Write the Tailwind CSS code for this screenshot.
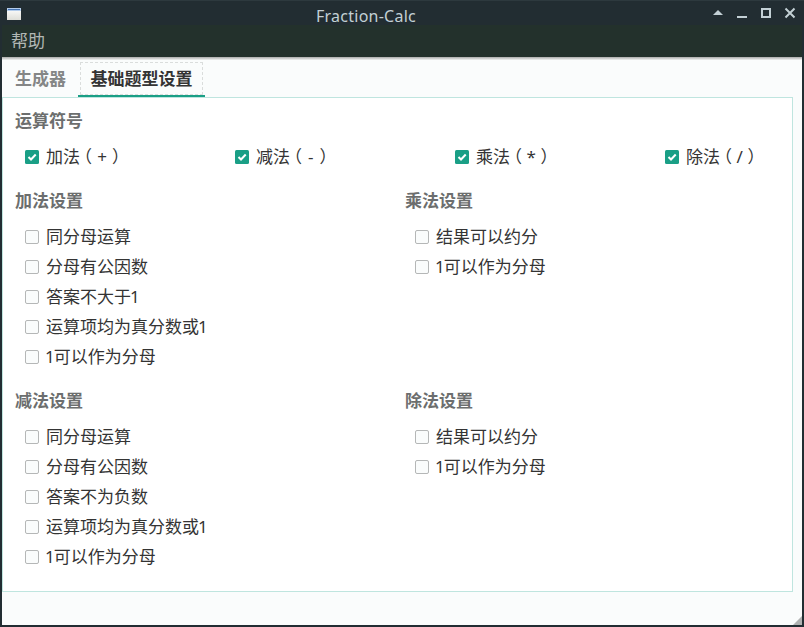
<!DOCTYPE html>
<html lang="zh-CN"><head><meta charset="utf-8"><title>Fraction-Calc</title>
<script src="https://cdn.jsdelivr.net/npm/@tailwindcss/browser@4"></script></head>
<body class="w-[804px] h-[627px] overflow-hidden bg-[#222d32]">
<div class="relative w-[804px] h-[627px] flex flex-col px-[2px] pb-[2px] bg-[#222d32] text-[17px] leading-[30px] text-[#343434] font-['Noto_Sans','Noto_Sans_CJK_SC',sans-serif]">
<header class="h-[25px] -mx-[2px] shrink-0 flex items-center border-t border-[#2d393e] relative text-[#c3d0d5]">
<svg class="ml-[7px] mt-px" width="14" height="12"><defs><linearGradient id="g" x2="0" y2="1"><stop stop-color="#fff"/><stop offset="1" stop-color="#deded8"/></linearGradient></defs><rect width="14" height="12" fill="url(#g)"/><rect width="14" height="3" fill="#b4cdec"/><rect x="1" y="1" width="12" height="1" fill="#4574b4"/></svg>
<h1 class="ml-[295px] text-[16px] leading-[24px] mt-[5px] tracking-[0.25px]">Fraction-Calc</h1>
<svg class="ml-auto mr-[7px]" width="85" height="24" fill="none" stroke="#c3d0d5" stroke-width="2"><path d="M1 14L6 9L11 14Z" fill="#c3d0d5" stroke="none"/><path d="M25 16H35"/><rect x="50" y="8" width="8" height="8"/><path d="M73.500 7.500L82.500 16.500M82.500 7.500L73.500 16.500"/></svg>
</header>
<nav class="h-8 shrink-0 bg-[#23312c] text-[#b1b7b4] pl-[9px] pt-px"><span>帮助</span></nav>
<main class="flex-1 bg-[#fafcfc] overflow-hidden">
<div class="h-[3px] bg-linear-to-b from-[#aaa] to-[#f2f4f4]"></div>
<div class="h-[37px] flex font-bold leading-[37px]">
<span class="w-[76px] pl-[13px] text-[#848686]">生成器</span>
<span class="w-[127px] h-[37px] border-b-2 border-[#1a9f86] px-[2px] pt-[2px] text-[#343434]"><span class="block h-[33px] border border-dashed border-[#dadddc] text-center leading-[31px]">基础题型设置</span></span>
</div>
<section class="w-[791px] h-[495px] border border-[#bfe5df] bg-white pl-[12px] pt-2">
<h2 class="font-bold text-[#6c6e6e]">运算符号</h2>
<div id="ops" class="flex pl-[10px] mt-[6px] h-[30px]"></div>
<div id="groups" class="grid grid-cols-[390px_380px] grid-rows-[200px_200px] mt-[14px]"></div>
</section>
</main>
<svg class="absolute right-[2px] bottom-[2px]" width="9" height="9"><path d="M0 9L9 0V9Z" fill="#b0b2b2"/></svg>
</div>
<script>
const box = on => on
 ? '<svg class="mr-[7px] shrink-0" width="14" height="14"><rect width="14" height="14" rx="1.5" fill="#1a9f86"/><path d="M3.500 7L6 9.500L10.700 4.500" fill="none" stroke="#fff" stroke-width="2"/></svg>'
 : '<span class="w-[14px] h-[14px] mr-[7px] shrink-0 rounded-[2px] border border-[#b5b7b7] bg-[#fafcfc]"></span>';
const sign = (s, w) => `<span class="w-[17px] pl-[3.5px] [font-feature-settings:'halt']">（</span><span class="flex justify-center" style="width:${w}px">${s}</span><span class="w-[17px] pl-[5px] [font-feature-settings:'halt']">）</span>`;
const label = s => s.replace(/^1/, '<span class="-ml-px tracking-[-1px]">1</span>').replace(/1$/, '<span class="-ml-px">1</span>');
document.getElementById('ops').innerHTML = [['加法','+',10,210],['减法','-',7.5,220],['乘法','*',8.5,210],['除法','/',5.5,100]].map(o =>
 `<label class="flex items-center shrink-0 h-[30px]" style="width:${o[3]}px">${box(true)}<span class="flex h-[30px] whitespace-nowrap"><span>${o[0]}</span>${sign(o[1], o[2])}</span></label>`).join('');
document.getElementById('groups').innerHTML = [
 ['加法设置','同分母运算','分母有公因数','答案不大于1','运算项均为真分数或1','1可以作为分母'],
 ['乘法设置','结果可以约分','1可以作为分母'],
 ['减法设置','同分母运算','分母有公因数','答案不为负数','运算项均为真分数或1','1可以作为分母'],
 ['除法设置','结果可以约分','1可以作为分母']
].map(([t, ...items]) => `<div><h2 class="h-[30px] font-bold text-[#6c6e6e] mb-[6px]">${t}</h2>${items.map(i =>
 `<label class="flex items-center h-[30px] pl-[10px]">${box(false)}<span class="h-[30px] whitespace-nowrap">${label(i)}</span></label>`).join('')}</div>`).join('');
</script>
</body></html>
